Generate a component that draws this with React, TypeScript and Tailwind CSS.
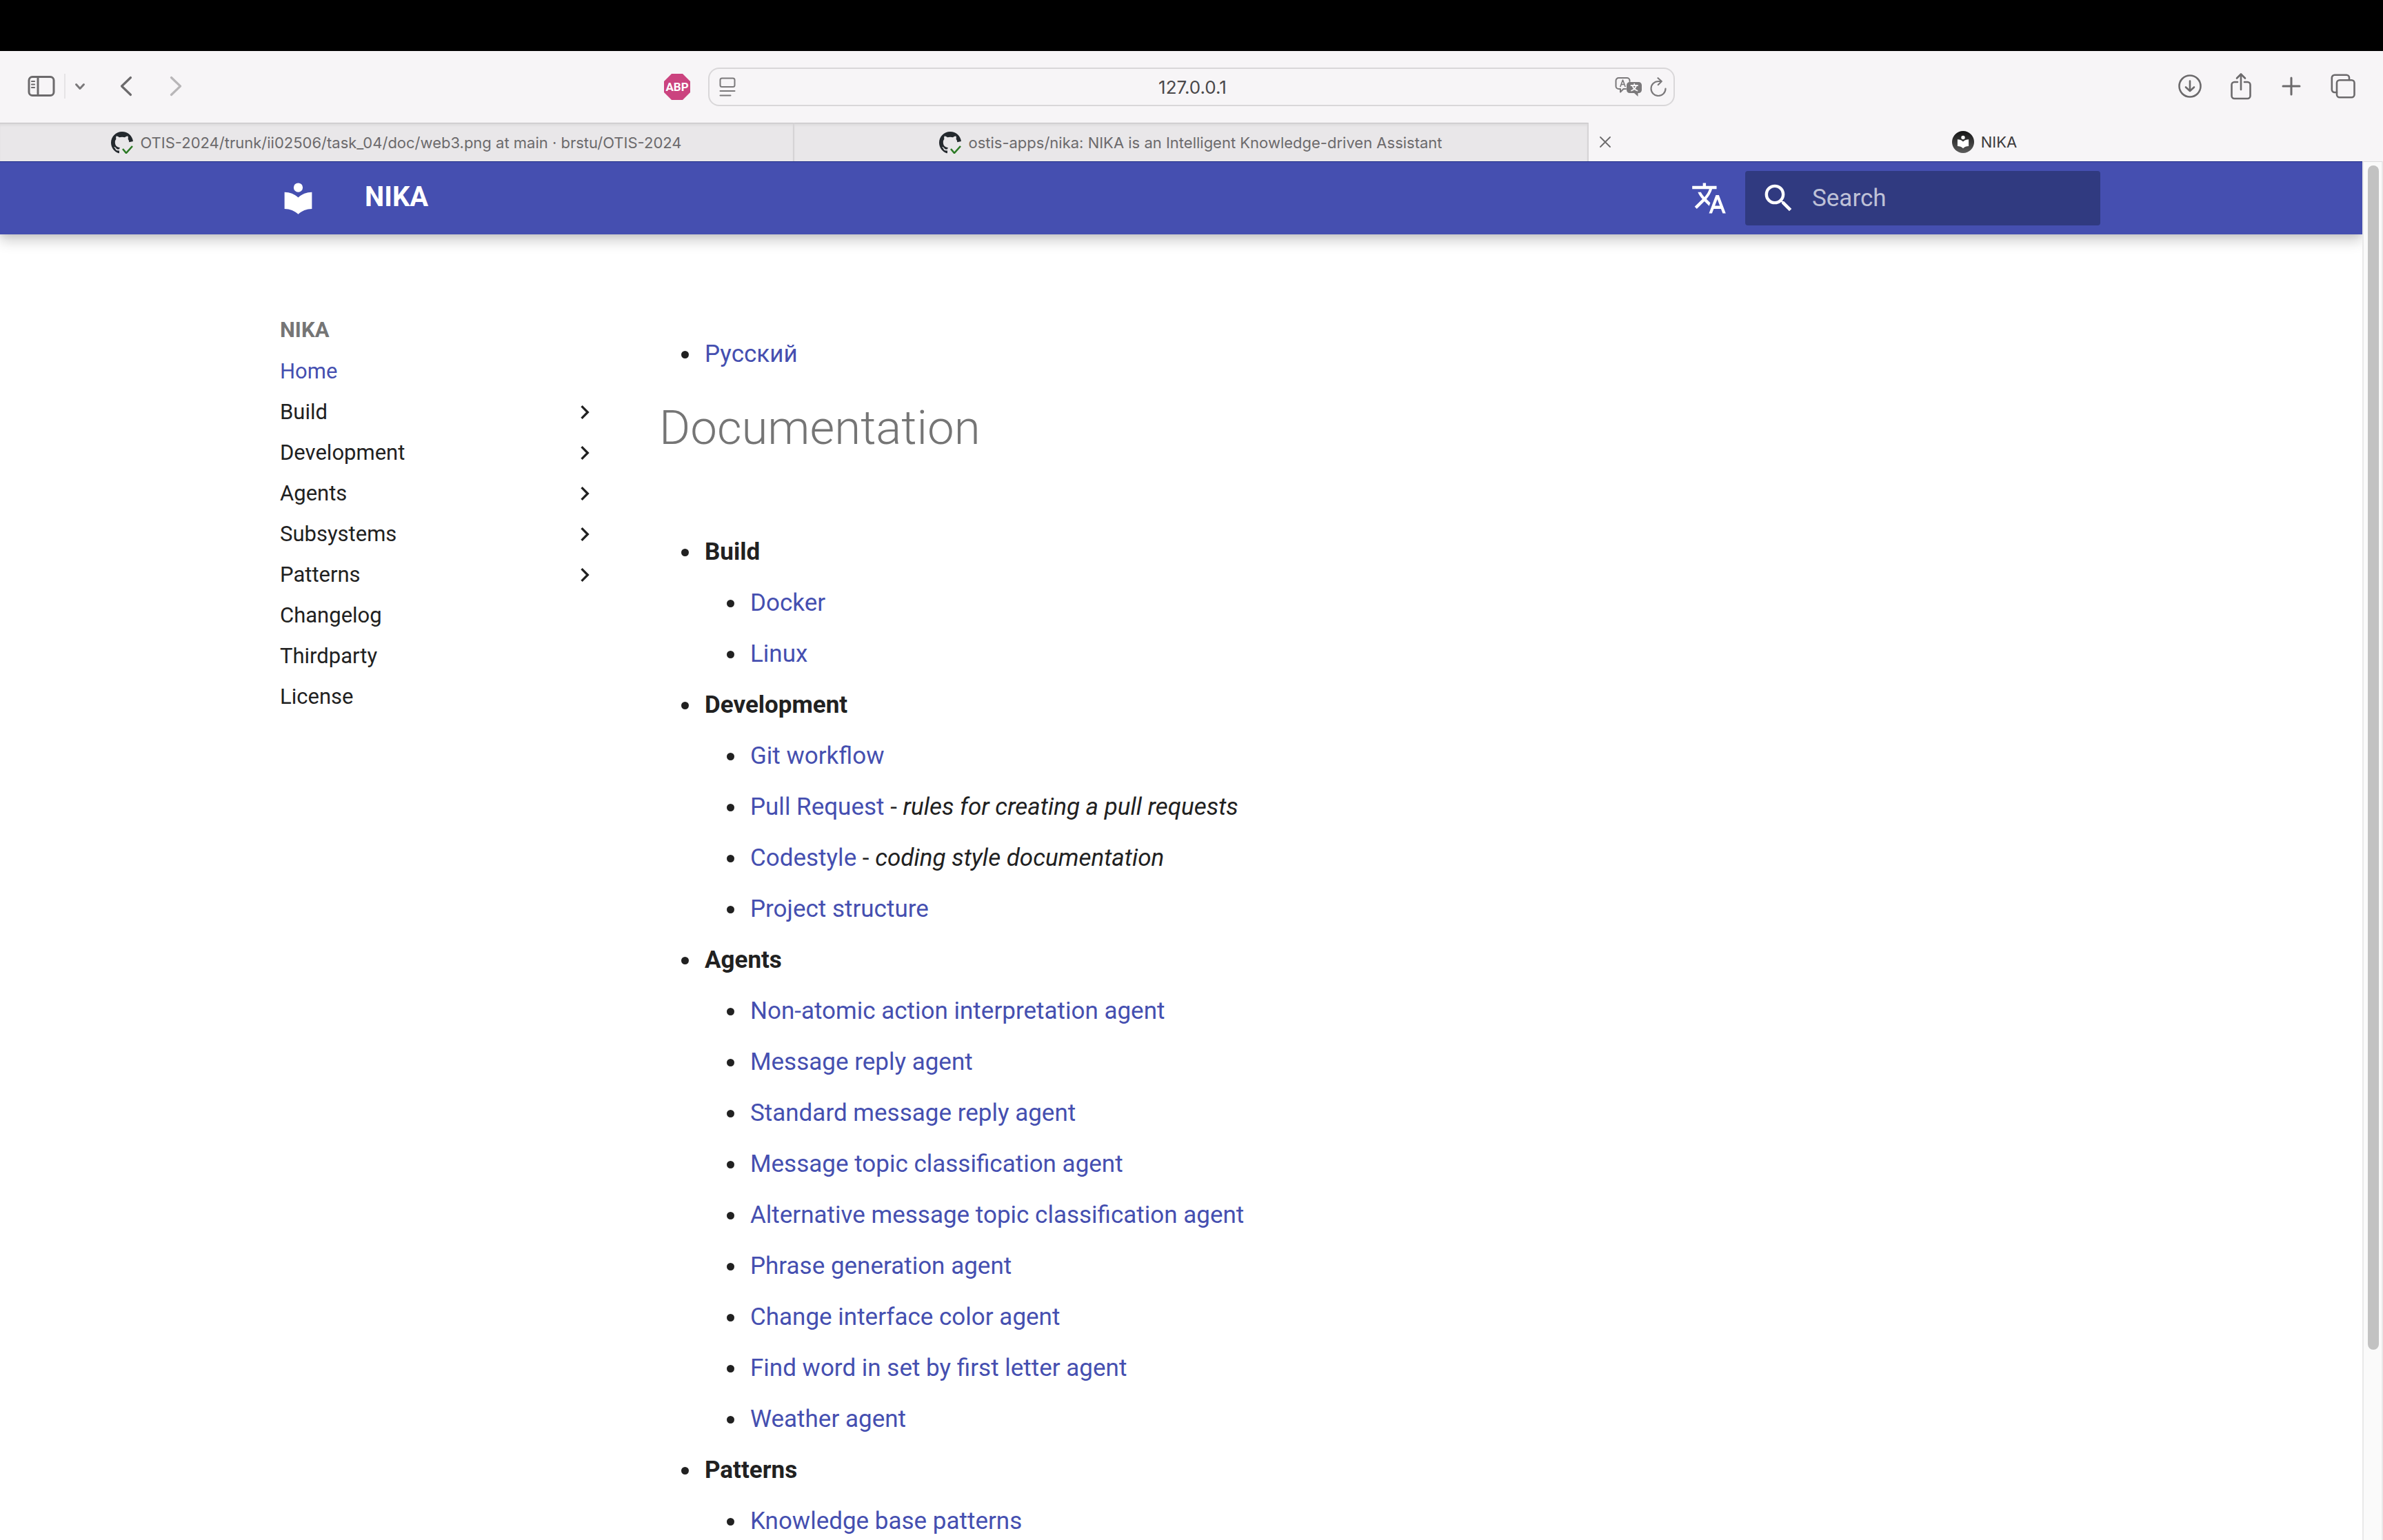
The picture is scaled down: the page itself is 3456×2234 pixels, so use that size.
import React from "react";

const INK = "#6c6a6c";

type IconProps = { className?: string };

function SidebarIcon() {
  return (
    <svg className="block h-8 w-10" viewBox="0 0 40 32" fill="none" stroke={INK} strokeWidth="3">
      <rect x="2" y="2.5" width="36" height="27" rx="5" />
      <path d="M15 3v26" />
      <path d="M6 9h4M6 13.5h4M6 18h4" strokeWidth="2.2" strokeLinecap="round" />
    </svg>
  );
}

function ChevronDown() {
  return (
    <svg className="block h-4 w-4" viewBox="0 0 16 16" fill="none" stroke="#7b797b" strokeWidth="3" strokeLinecap="round" strokeLinejoin="round">
      <path d="M2.5 5.5 8 11.5l5.5-6" />
    </svg>
  );
}

function BackIcon() {
  return (
    <svg className="block h-8 w-5" viewBox="0 0 20 32" fill="none" stroke={INK} strokeWidth="3.2" strokeLinecap="round" strokeLinejoin="round">
      <path d="M16.5 3.5 3.5 16l13 12.5" />
    </svg>
  );
}

function ForwardIcon() {
  return (
    <svg className="block h-8 w-5" viewBox="0 0 20 32" fill="none" stroke="#b8b6b8" strokeWidth="3.2" strokeLinecap="round" strokeLinejoin="round">
      <path d="M3.5 3.5 16.5 16l-13 12.5" />
    </svg>
  );
}

function ReaderIcon() {
  return (
    <svg className="block h-7 w-6" viewBox="0 0 24 28" fill="none" stroke="#7b797b" strokeWidth="2" strokeLinecap="round">
      <rect x="1.5" y="1.5" width="21" height="12.5" rx="2.5" />
      <path d="M1.5 20h21M1.5 26.5h15" />
    </svg>
  );
}

function PageTranslateIcon() {
  return (
    <svg className="block h-7 w-10" viewBox="0 0 40 28" fill="none" stroke="#7b797b" strokeWidth="2" strokeLinecap="round" strokeLinejoin="round">
      <path d="M16 17h-3.5L8 21.5V17H5.500A4 4 0 0 1 1.5 13V5a4 4 0 0 1 4-4h12a4 4 0 0 1 4 4v1" />
      <path d="M8 13.5 11.5 4l3.5 9.5M9.2 10.5h4.6" strokeWidth="1.6" />
      <path d="M21.5 7h13a4.5 4.5 0 0 1 4.5 4.5v7a4.5 4.5 0 0 1-4.5 4.5H33.5v5L28 23h-6.500A4.5 4.5 0 0 1 17 18.5v-7A4.5 4.5 0 0 1 21.5 7Z" fill="#7b797b" stroke="none" />
      <path d="M23.5 12h9.500M28.2 9.800V12M31 12c-.8 3.600-3 6-7 7.500M25.500 12c.8 3.600 3 6 7 7.500" stroke="#f7f5f7" strokeWidth="1.8" />
    </svg>
  );
}

function ReloadIcon() {
  return (
    <svg className="block h-7 w-6" viewBox="0 0 24 28" fill="none" stroke="#7b797b" strokeWidth="2.2" strokeLinecap="round" strokeLinejoin="round">
      <path d="M22.5 16.5A10.5 10.5 0 1 1 12 6h4.5M11.5 1.2 16.8 6l-5 5" />
    </svg>
  );
}

function DownloadIcon() {
  return (
    <svg className="block h-9 w-9" viewBox="0 0 36 36" fill="none" stroke={INK} strokeWidth="2.6" strokeLinecap="round" strokeLinejoin="round">
      <circle cx="18" cy="18" r="15.5" />
      <path d="M18 10.5v14M12 19.5l6 5.5 6-5.5" />
    </svg>
  );
}

function ShareIcon() {
  return (
    <svg className="block h-10 w-8" viewBox="0 0 32 40" fill="none" stroke={INK} strokeWidth="2.6" strokeLinecap="round" strokeLinejoin="round">
      <path d="M11 14H6.500A4 4 0 0 0 2.5 18v16a4 4 0 0 0 4 4h19a4 4 0 0 0 4-4V18a4 4 0 0 0-4-4H21" />
      <path d="M16 25V3M10 8.5 16 2.5l6 6" />
    </svg>
  );
}

function PlusIcon() {
  return (
    <svg className="block h-7 w-7" viewBox="0 0 28 28" fill="none" stroke={INK} strokeWidth="3" strokeLinecap="round">
      <path d="M14 2v24M2 14h24" />
    </svg>
  );
}

function TabsIcon() {
  return (
    <svg className="block h-9 w-9" viewBox="0 0 36 36" fill="none" stroke={INK} strokeWidth="2.6" strokeLinecap="round">
      <path d="M9 27H5.800A4 4 0 0 1 1.8 23V5.800a4 4 0 0 1 4-4H23a4 4 0 0 1 4 4V9" />
      <rect x="9" y="9.2" width="25.5" height="25" rx="4" />
    </svg>
  );
}

function AbpIcon() {
  return (
    <span className="grid h-[38px] w-[38px] place-items-center bg-[#cb437f] font-['Roboto',sans-serif] text-[17px] leading-none font-bold text-white [clip-path:polygon(29%_0,71%_0,100%_29%,100%_71%,71%_100%,29%_100%,0_71%,0_29%)]">
      ABP
    </span>
  );
}

function GithubCheckIcon() {
  return (
    <svg className="block h-8 w-8 shrink-0" viewBox="0 0 32 32">
      <path
        fill="#24292e"
        fillRule="evenodd"
        d="M16 0C7.160 0 0 7.160 0 16c0 7.080 4.580 13.060 10.940 15.180.8.140 1.060-.34 1.060-.76v-2.980c-4.020.74-5.060-.98-5.380-1.880-.18-.46-.96-1.880-1.640-2.260-.56-.3-1.360-1.040-.02-1.060 1.260-.02 2.160 1.160 2.460 1.640 1.440 2.420 3.740 1.740 4.660 1.320.14-1.040.56-1.740 1.020-2.140-3.560-.4-7.280-1.780-7.280-7.900 0-1.740.62-3.180 1.640-4.300-.16-.4-.72-2.040.16-4.240 0 0 1.340-.42 4.400 1.640 1.280-.36 2.640-.54 4-.54s2.720.18 4 .54c3.060-2.080 4.400-1.640 4.400-1.640.88 2.200.32 3.840.16 4.240 1.020 1.120 1.640 2.540 1.640 4.300L32 14C31 6 24.500 0 16 0Z"
      />
      <path d="m17 25 5 6 9-10" fill="none" stroke="#2c7a25" strokeWidth="2.6" />
    </svg>
  );
}

const LIBRARY_PATH =
  "M12 8a3 3 0 0 0 3-3 3 3 0 0 0-3-3 3 3 0 0 0-3 3 3 3 0 0 0 3 3m0 3.54C9.64 9.35 6.5 8 3 8v11c3.5 0 6.64 1.35 9 3.54 2.36-2.19 5.5-3.54 9-3.54V8c-3.5 0-6.64 1.35-9 3.54Z";

function NikaFavicon() {
  return (
    <svg className="block h-8 w-8 shrink-0" viewBox="0 0 32 32">
      <defs>
        <linearGradient id="favicon-fill" x1="0" y1="0" x2="0" y2="1">
          <stop offset="0" stopColor="#151515" />
          <stop offset="1" stopColor="#5c5c5c" />
        </linearGradient>
      </defs>
      <circle cx="16" cy="16" r="16" fill="url(#favicon-fill)" />
      <path transform="translate(5.2 5) scale(.9)" d={LIBRARY_PATH} fill="#fff" />
    </svg>
  );
}

function CloseIcon() {
  return (
    <svg className="block h-4 w-4" viewBox="0 0 16 16" fill="none" stroke={INK} strokeWidth="1.8" strokeLinecap="round">
      <path d="m1 1 14 14M15 1 1 15" />
    </svg>
  );
}

function MaterialIcon({ d, className }: IconProps & { d: string }) {
  return (
    <svg className={className} viewBox="0 0 24 24" fill="currentColor" aria-hidden="true">
      <path d={d} />
    </svg>
  );
}

const TRANSLATE_PATH =
  "m12.87 15.07-2.54-2.51.03-.03A17.52 17.52 0 0 0 14.07 6H17V4h-7V2H8v2H1v2h11.17C11.5 7.92 10.44 9.75 9 11.35 8.07 10.32 7.3 9.19 6.69 8h-2c.73 1.63 1.73 3.17 2.98 4.56l-5.09 5.02L4 19l5-5 3.11 3.11.76-2.04M18.5 10h-2L12 22h2l1.12-3h4.75L21 22h2l-4.5-12m-2.62 7 1.62-4.33L19.12 17h-3.24Z";
const MAGNIFY_PATH =
  "M9.5 3A6.5 6.5 0 0 1 16 9.5c0 1.61-.59 3.09-1.56 4.23l.27.27h.79l5 5-1.5 1.5-5-5v-.79l-.27-.27A6.516 6.516 0 0 1 9.5 16 6.5 6.5 0 0 1 3 9.5 6.5 6.5 0 0 1 9.5 3m0 2C7 5 5 7 5 9.5S7 14 9.5 14 14 12 14 9.5 12 5 9.5 5Z";
const CHEVRON_PATH = "M8.59 16.58 13.17 12 8.59 7.41 10 6l6 6-6 6-1.41-1.42Z";

function Toolbar() {
  return (
    <div className="grid h-[104px] grid-cols-[1fr_1402px_1fr] items-start bg-[#f7f5f7] pt-6">
      <div className="flex h-14 items-center justify-between pr-[26px] pl-10">
        <div className="flex items-center pb-0.5">
          <button type="button" aria-label="Show sidebar"><SidebarIcon /></button>
          <span className="mx-[13px] h-9 w-[2px] bg-[#e6e4e6]" />
          <button type="button" aria-label="Tab groups"><ChevronDown /></button>
          <button type="button" aria-label="Back" className="ml-[49px]"><BackIcon /></button>
          <button type="button" aria-label="Forward" className="ml-[52px]"><ForwardIcon /></button>
        </div>
        <button type="button" aria-label="Adblock Plus"><AbpIcon /></button>
      </div>
      <div className="flex h-14 items-center rounded-2xl border-2 border-[#d9d7d9] pr-[10px] pl-[14px]">
        <button type="button" aria-label="Reader"><ReaderIcon /></button>
        <input
          aria-label="Address"
          defaultValue="127.0.0.1"
          className="ml-[50px] min-w-0 flex-1 bg-transparent pt-0.5 text-center text-[26px] leading-8 text-[#4a484a] outline-none"
        />
        <button type="button" aria-label="Translate page"><PageTranslateIcon /></button>
        <button type="button" aria-label="Reload" className="ml-[11px]"><ReloadIcon /></button>
      </div>
      <div className="flex h-14 items-center justify-end pr-10 pb-0.5">
        <button type="button" aria-label="Downloads"><DownloadIcon /></button>
        <button type="button" aria-label="Share" className="ml-10"><ShareIcon /></button>
        <button type="button" aria-label="New tab" className="ml-[43px]"><PlusIcon /></button>
        <button type="button" aria-label="Tab overview" className="ml-[43px]"><TabsIcon /></button>
      </div>
    </div>
  );
}

function InactiveTab({ title }: { title: string }) {
  return (
    <button
      type="button"
      role="tab"
      aria-selected="false"
      className="flex h-full items-center justify-center gap-[10px] border-t border-r-2 border-t-[#c4c2c4] border-r-[#d6d4d6] bg-[#e9e7e9] text-[#6c6a6c] shadow-[inset_0_4px_4px_-2px_rgba(0,0,0,0.08)]"
    >
      <GithubCheckIcon />
      <span>{title}</span>
    </button>
  );
}

function TabStrip() {
  return (
    <div role="tablist" className="grid h-14 grid-cols-3 bg-[#f7f5f7] text-[22px] leading-7">
      <InactiveTab title="OTIS-2024/trunk/ii02506/task_04/doc/web3.png at main · brstu/OTIS-2024" />
      <InactiveTab title="ostis-apps/nika: NIKA is an Intelligent Knowledge-driven Assistant" />
      <div className="grid grid-cols-[32px_1fr_36px] items-center px-4">
        <button type="button" aria-label="Close tab"><CloseIcon /></button>
        <button type="button" role="tab" aria-selected="true" className="flex items-center justify-center gap-[10px] text-[#3c3a3c]">
          <NikaFavicon />
          <span>NIKA</span>
        </button>
      </div>
    </div>
  );
}

function SiteHeader() {
  return (
    <header className="relative z-10 h-[106px] border-t border-[#1b2a86] bg-[#454fb0] text-white shadow-[0_0_9px_rgba(0,0,0,0.1),0_9px_18px_rgba(0,0,0,0.2)]">
      <div className="mx-auto flex h-full max-w-[2684px] items-center pr-[9px] pl-[35px]">
        <a href="#home" aria-label="NIKA home"><MaterialIcon d={LIBRARY_PATH} className="block h-[53px] w-[53px]" /></a>
        <a href="#home" className="ml-[70px] flex-1 pb-1 text-[40px] leading-[48px] font-bold">NIKA</a>
        <button type="button" aria-label="Select language"><MaterialIcon d={TRANSLATE_PATH} className="block h-[53px] w-[53px]" /></button>
        <label className="ml-[26px] flex h-[79px] w-[515px] items-center rounded bg-[#303a80] pr-4 pl-[22px]">
          <MaterialIcon d={MAGNIFY_PATH} className="h-[53px] w-[53px] shrink-0" />
          <input
            type="search"
            aria-label="Search"
            placeholder="Search"
            className="ml-[22px] min-w-0 flex-1 bg-transparent text-[35px] leading-[48px] outline-none placeholder:text-white/70"
          />
        </label>
      </div>
    </header>
  );
}

const NAV: { label: string; nested?: boolean; active?: boolean }[] = [
  { label: "Home", active: true },
  { label: "Build", nested: true },
  { label: "Development", nested: true },
  { label: "Agents", nested: true },
  { label: "Subsystems", nested: true },
  { label: "Patterns", nested: true },
  { label: "Changelog" },
  { label: "Thirdparty" },
  { label: "License" },
];

function SideNav() {
  return (
    <nav aria-label="NIKA" className="w-[533px] shrink-0 pt-[119px] pr-9 pl-[35px] text-[31px] leading-[40px] text-[#212121]">
      <p className="font-bold text-[#757575]">NIKA</p>
      <ul className="mt-5 flex flex-col gap-[19px]">
        {NAV.map((item) => (
          <li key={item.label}>
            {item.nested ? (
              <button type="button" aria-expanded="false" className="flex w-full items-center justify-between text-left">
                {item.label}
                <MaterialIcon d={CHEVRON_PATH} className="h-10 w-10" />
              </button>
            ) : (
              <a href={"#" + item.label.toLowerCase()} className={item.active ? "block text-[#454fb0]" : "block"}>
                {item.label}
              </a>
            )}
          </li>
        ))}
      </ul>
    </nav>
  );
}

const SECTIONS: { title: string; items: { label: string; note?: string }[] }[] = [
  { title: "Build", items: [{ label: "Docker" }, { label: "Linux" }] },
  {
    title: "Development",
    items: [
      { label: "Git workflow" },
      { label: "Pull Request", note: "rules for creating a pull requests" },
      { label: "Codestyle", note: "coding style documentation" },
      { label: "Project structure" },
    ],
  },
  {
    title: "Agents",
    items: [
      { label: "Non-atomic action interpretation agent" },
      { label: "Message reply agent" },
      { label: "Standard message reply agent" },
      { label: "Message topic classification agent" },
      { label: "Alternative message topic classification agent" },
      { label: "Phrase generation agent" },
      { label: "Change interface color agent" },
      { label: "Find word in set by first letter agent" },
      { label: "Weather agent" },
    ],
  },
  { title: "Patterns", items: [{ label: "Knowledge base patterns" }] },
];

function Article() {
  return (
    <main className="min-w-0 flex-1 px-[52px] pt-[146px] text-[35px] leading-[56px] text-[#212121]">
      <ul className="list-disc pl-[60px]">
        <li className="pl-[6px]"><a href="#ru" lang="ru" className="text-[#454fb0]">Русский</a></li>
      </ul>
      <h1 className="mt-[33px] text-[69px] leading-[91px] font-light text-[#757575]">Documentation</h1>
      <ul className="mt-[107px] flex list-disc flex-col gap-[18px] pl-[60px]">
        {SECTIONS.map((section) => (
          <li key={section.title} className="pl-[6px]">
            <strong className="font-bold">{section.title}</strong>
            <ul className="mt-[18px] flex list-disc flex-col gap-[18px] pl-[60px]">
              {section.items.map((item) => (
                <li key={item.label} className="pl-[6px]">
                  <a href="#doc" className="text-[#454fb0]">{item.label}</a>
                  {item.note && (
                    <>
                      {" - "}
                      <em>{item.note}</em>
                    </>
                  )}
                </li>
              ))}
            </ul>
          </li>
        ))}
      </ul>
    </main>
  );
}

function Scrollbar() {
  return (
    <div aria-hidden="true" className="w-[30px] shrink-0 border-x-2 border-t border-x-[#e9e9e9] border-t-[#dcdcdc] bg-[#fafafa] px-[6px] pt-[5px] pb-[276px]">
      <div className="h-full w-4 rounded-full bg-[#c2c2c2]" />
    </div>
  );
}

export default function App() {
  return (
    <div className="flex h-screen flex-col overflow-hidden bg-white font-['Inter',sans-serif]">
      <div className="h-[74px] shrink-0 bg-black" />
      <div className="shrink-0">
        <Toolbar />
        <TabStrip />
      </div>
      <div className="flex min-h-0 flex-1">
        <div className="min-w-0 flex-1 overflow-hidden font-['Roboto',sans-serif]">
          <SiteHeader />
          <div className="mx-auto flex max-w-[2684px]">
            <SideNav />
            <Article />
          </div>
        </div>
        <Scrollbar />
      </div>
    </div>
  );
}
